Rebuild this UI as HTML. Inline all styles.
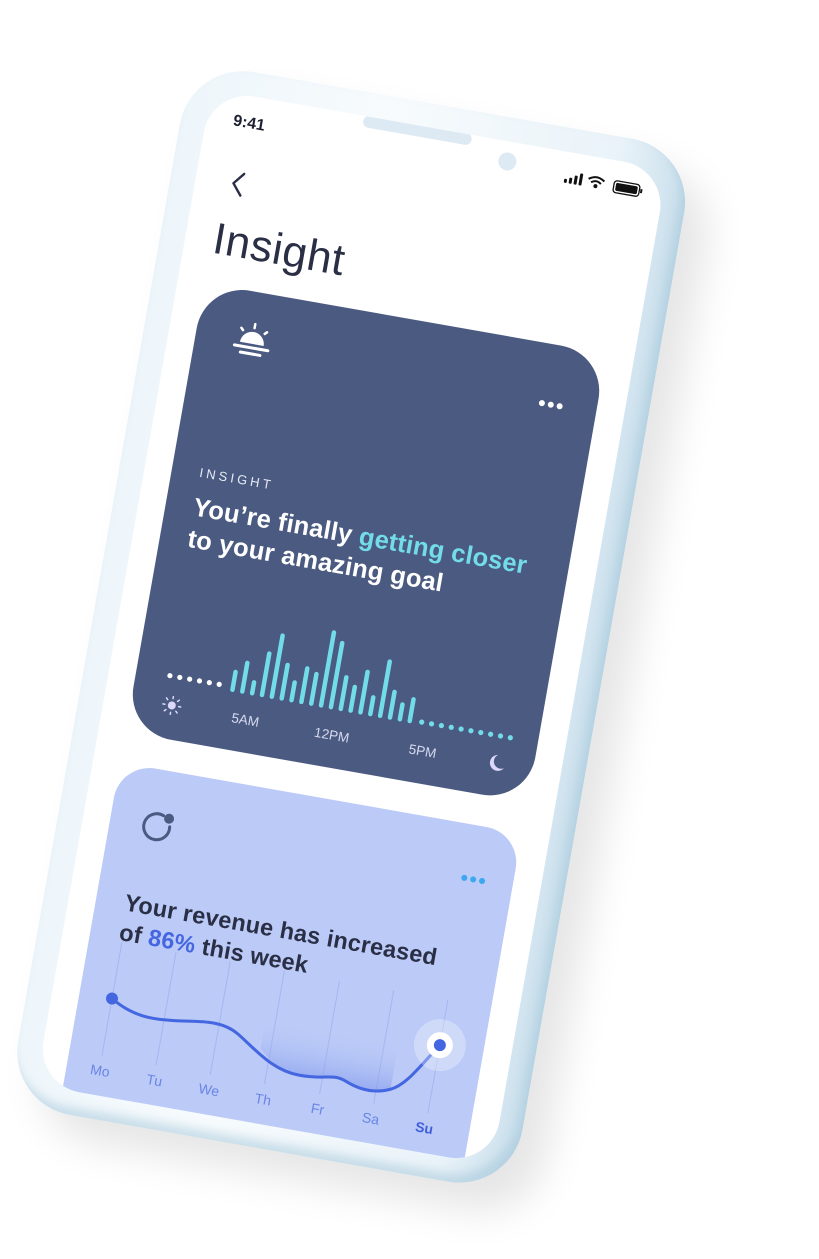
<!DOCTYPE html>
<html><head><meta charset="utf-8">
<style>
html,body{margin:0;padding:0;background:#fff;}
body{width:819px;height:1259px;overflow:hidden;position:relative;font-family:"Liberation Sans",sans-serif;}
#ph{position:absolute;left:191px;top:61px;width:512px;height:1059px;transform-origin:0 0;transform:rotate(10deg);}
.frame{position:absolute;left:0;top:0;width:512px;height:1059px;border-radius:64px;
background:linear-gradient(90deg,#eef6fb 0%,#f7fbfd 40%,#eaf3f9 85%,#c9dfec 100%);
box-shadow:28px 24px 40px rgba(0,0,0,0.10), inset -6px -8px 10px rgba(160,195,215,0.5);}
.screen{position:absolute;left:25px;top:24px;width:463px;height:1011px;border-radius:44px;background:#fff;overflow:hidden;}
.a{position:absolute;}
</style></head><body>
<div id="ph">
<div class="frame"></div>
<div class="screen">
 <div class="a" style="left:-25px;top:-24px;width:512px;height:1059px;">
  <div class="a" style="left:52px;top:43px;font-size:16px;font-weight:bold;color:#1d2030;">9:41</div>
  <div class="a" style="left:180px;top:23px;width:110px;height:12px;border-radius:6px;background:#dde9f3;"></div>
  <div class="a" style="left:320px;top:35px;width:18px;height:18px;border-radius:9px;background:#dde9f3;"></div>
  <svg class="a" style="left:388px;top:42px" width="86" height="16" viewBox="0 0 86 16">
   <rect x="0" y="9" width="3" height="4" rx="1" fill="#111"/><rect x="5" y="7" width="3" height="6" rx="1" fill="#111"/><rect x="10" y="4" width="3" height="9" rx="1" fill="#111"/><rect x="15" y="1" width="3" height="12" rx="1" fill="#111"/>
   <path d="M24 5 Q32 -1 40 5 M27 8 Q32 4 37 8" stroke="#111" stroke-width="2" fill="none"/><circle cx="32" cy="11" r="2" fill="#111"/>
   <rect x="50" y="2" width="26" height="12" rx="3" fill="none" stroke="#111" stroke-width="1.3"/><rect x="52" y="4" width="22" height="8" rx="1.5" fill="#111"/><rect x="77" y="6" width="2" height="4" fill="#111"/>
  </svg>
  <svg class="a" style="left:58px;top:100px" width="20" height="26" viewBox="0 0 20 26"><path d="M14 2 L5 13 L14 24" stroke="#2a2f45" stroke-width="2.4" fill="none" stroke-linecap="round" stroke-linejoin="round"/></svg>
  <div class="a" style="left:53px;top:146px;font-size:44px;font-weight:500;color:#2a2f45;letter-spacing:0.5px;">Insight</div>

  <div class="a" style="left:52px;top:216px;width:408px;height:456px;border-radius:46px;background:#4b5a81;">
   <svg class="a" style="left:36px;top:30px" width="42" height="40" viewBox="0 0 42 40">
    <path d="M9 22 A12 12 0 0 1 33 22 Z" fill="#fff"/>
    <line x1="4" y1="26" x2="38" y2="26" stroke="#fff" stroke-width="3" stroke-linecap="round"/>
    <line x1="11" y1="32" x2="31" y2="32" stroke="#fff" stroke-width="3" stroke-linecap="round"/>
    <line x1="21" y1="2" x2="21" y2="6" stroke="#fff" stroke-width="2.5" stroke-linecap="round"/>
    <line x1="8" y1="8" x2="10" y2="10" stroke="#fff" stroke-width="2.5" stroke-linecap="round"/>
    <line x1="34" y1="8" x2="32" y2="10" stroke="#fff" stroke-width="2.5" stroke-linecap="round"/>
   </svg>
   <div class="a" style="left:350px;top:50px;"><span style="display:inline-block;width:6px;height:6px;border-radius:3px;background:#fff;margin-right:3px"></span><span style="display:inline-block;width:6px;height:6px;border-radius:3px;background:#fff;margin-right:3px"></span><span style="display:inline-block;width:6px;height:6px;border-radius:3px;background:#fff"></span></div>
   <div class="a" style="left:28px;top:180px;font-size:13px;letter-spacing:3.2px;color:#e6e9f5;">INSIGHT</div>
   <div class="a" style="left:28px;top:207px;font-size:25.5px;font-weight:600;line-height:32px;color:#fff;white-space:nowrap;letter-spacing:0.2px;">You’re finally <span style="color:#72dde9">getting closer</span><br>to your amazing goal</div>
   <svg class="a" style="left:0;top:300px" width="408" height="156" viewBox="0 300 408 156">
    <g fill="#fff"><circle cx="34" cy="393" r="2.6"/><circle cx="44" cy="393" r="2.6"/><circle cx="54" cy="393" r="2.6"/><circle cx="64" cy="393" r="2.6"/><circle cx="74" cy="393" r="2.6"/><circle cx="84" cy="393" r="2.6"/></g>
    <g stroke="#72dde9" stroke-width="4.5" stroke-linecap="round">
     <line x1="98" y1="396" x2="98" y2="378"/><line x1="108" y1="396" x2="108" y2="367"/><line x1="118" y1="396" x2="118" y2="385"/><line x1="128" y1="396" x2="128" y2="354"/><line x1="138" y1="396" x2="138" y2="334"/><line x1="148" y1="396" x2="148" y2="362"/><line x1="158" y1="396" x2="158" y2="378"/><line x1="168" y1="396" x2="168" y2="362"/><line x1="178" y1="396" x2="178" y2="366"/><line x1="188" y1="396" x2="188" y2="322"/><line x1="198" y1="396" x2="198" y2="331"/><line x1="208" y1="396" x2="208" y2="364"/><line x1="218" y1="396" x2="218" y2="372"/><line x1="228" y1="396" x2="228" y2="355"/><line x1="238" y1="396" x2="238" y2="379"/><line x1="248" y1="396" x2="248" y2="341"/><line x1="258" y1="396" x2="258" y2="370"/><line x1="268" y1="396" x2="268" y2="381"/><line x1="278" y1="396" x2="278" y2="374"/>
    </g>
    <g fill="#72dde9"><circle cx="290" cy="395" r="2.6"/><circle cx="300" cy="395" r="2.6"/><circle cx="310" cy="395" r="2.6"/><circle cx="320" cy="395" r="2.6"/><circle cx="330" cy="395" r="2.6"/><circle cx="340" cy="395" r="2.6"/><circle cx="350" cy="395" r="2.6"/><circle cx="360" cy="395" r="2.6"/><circle cx="370" cy="395" r="2.6"/><circle cx="380" cy="395" r="2.6"/></g>
    <g transform="translate(41,422)" stroke="#dcd8fb" stroke-width="1.5" stroke-linecap="round"><circle r="4" fill="#dcd8fb" stroke="none"/><line x1="0" y1="-7" x2="0" y2="-9"/><line x1="0" y1="7" x2="0" y2="9"/><line x1="-7" y1="0" x2="-9" y2="0"/><line x1="7" y1="0" x2="9" y2="0"/><line x1="5" y1="5" x2="6.5" y2="6.5"/><line x1="-5" y1="-5" x2="-6.5" y2="-6.5"/><line x1="5" y1="-5" x2="6.5" y2="-6.5"/><line x1="-5" y1="5" x2="-6.5" y2="6.5"/></g>
    <path d="M371 414 A8 8 0 1 0 379 426 A7 7 0 0 1 371 414 Z" fill="#dcd8fb"/>
   </svg>
   <div class="a" style="left:102px;top:416px;font-size:13.5px;color:#d6daf0;">5AM</div>
   <div class="a" style="left:186px;top:416px;font-size:13.5px;color:#d6daf0;">12PM</div>
   <div class="a" style="left:282px;top:416px;font-size:13.5px;color:#d6daf0;">5PM</div>
  </div>

  <div class="a" style="left:52px;top:703px;width:408px;height:400px;border-radius:36px;background:#bbcaf7;overflow:hidden;">
   <svg class="a" style="left:30px;top:40px" width="36" height="36" viewBox="0 0 36 36"><path d="M22 5 A13 13 0 1 0 30 15" stroke="#4b5a81" stroke-width="3" fill="none" stroke-linecap="round"/><circle cx="28" cy="7" r="5" fill="#4b5a81"/></svg>
   <div class="a" style="left:356px;top:44px;"><span style="display:inline-block;width:6px;height:6px;border-radius:3px;background:#3da7f0;margin-right:3px"></span><span style="display:inline-block;width:6px;height:6px;border-radius:3px;background:#3da7f0;margin-right:3px"></span><span style="display:inline-block;width:6px;height:6px;border-radius:3px;background:#3da7f0"></span></div>
   <div class="a" style="left:29px;top:122px;font-size:23.5px;font-weight:600;line-height:30px;color:#2a2f45;white-space:nowrap;letter-spacing:0.2px;">Your revenue has increased<br>of <span style="color:#4466e0">86%</span> this week</div>
   <svg class="a" style="left:0;top:0" width="408" height="400" viewBox="52 703 408 400">
    <defs><linearGradient id="g" x1="0" y1="0" x2="0" y2="1"><stop offset="0" stop-color="#bbcaf7" stop-opacity="0"/><stop offset="1" stop-color="#6f8aea" stop-opacity="0.8"/></linearGradient></defs>
    <g stroke="#a6b6f0" stroke-width="1">
     <line x1="85" y1="880" x2="85" y2="995"/><line x1="140" y1="880" x2="140" y2="995"/><line x1="195" y1="880" x2="195" y2="995"/><line x1="250" y1="880" x2="250" y2="995"/><line x1="306" y1="880" x2="306" y2="995"/><line x1="361" y1="880" x2="361" y2="995"/><line x1="416" y1="880" x2="416" y2="995"/>
    </g>
    <path d="M240 960 C255 975 268 980 283 980 S315 972 330 978 S360 985 375 978 L375 930 L240 930 Z" fill="url(#g)" opacity="0.6"/>
    <path d="M85 937 C110 952 130 950 150 948 S195 938 215 950 S255 980 283 980 S315 972 330 978 S360 985 375 978 S400 950 416 926" stroke="#4466e0" stroke-width="3" fill="none"/>
    <circle cx="85" cy="937" r="6" fill="#4466e0"/>
    <circle cx="416" cy="926" r="26" fill="#fff" opacity="0.3"/>
    <circle cx="416" cy="926" r="13" fill="#fff"/>
    <circle cx="416" cy="926" r="6" fill="#4466e0"/>
   </svg>
   <div class="a" style="left:24px;top:299px;font-size:14px;color:#6a85e6;">Mo</div>
   <div class="a" style="left:81px;top:299px;font-size:14px;color:#6a85e6;">Tu</div>
   <div class="a" style="left:134px;top:299px;font-size:14px;color:#6a85e6;">We</div>
   <div class="a" style="left:191px;top:299px;font-size:14px;color:#6a85e6;">Th</div>
   <div class="a" style="left:248px;top:299px;font-size:14px;color:#6a85e6;">Fr</div>
   <div class="a" style="left:300px;top:299px;font-size:14px;color:#6a85e6;">Sa</div>
   <div class="a" style="left:354px;top:299px;font-size:14px;font-weight:bold;color:#3f5fd9;">Su</div>
  </div>
 </div>
</div>
</div>
</body></html>
